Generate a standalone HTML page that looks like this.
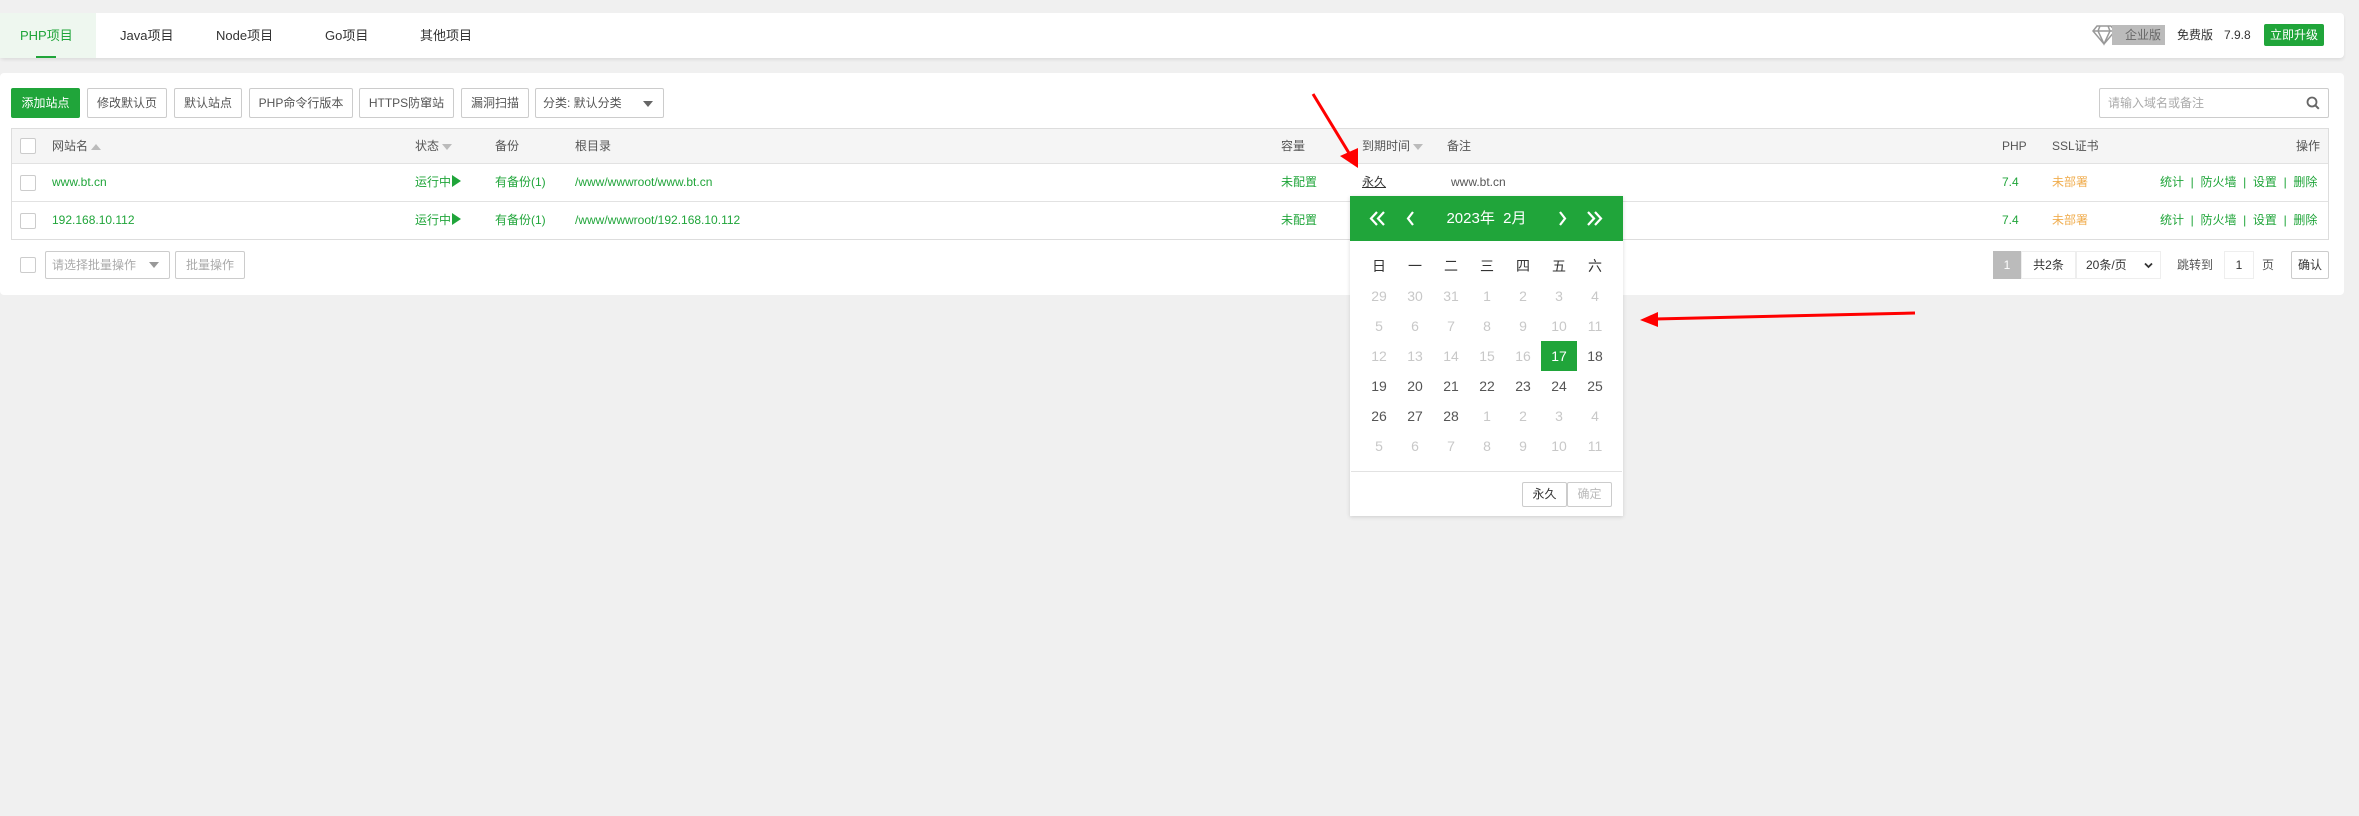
<!DOCTYPE html>
<html><head><meta charset="utf-8"><style>
*{margin:0;padding:0;box-sizing:border-box}
body{width:2359px;height:816px;background:#f0f0f0;position:relative;overflow:hidden;font-family:"Liberation Sans","Noto Sans CJK SC",sans-serif;font-size:12px;color:#555}
.a{position:absolute;white-space:nowrap}
.panel{position:absolute;background:#fff;border-radius:4px}
.btn{position:absolute;height:30px;border:1px solid #ccc;border-radius:2px;background:#fff;line-height:28px;text-align:center;color:#555;font-size:12px;white-space:nowrap;overflow:hidden}
.g{color:#20a53a}
.cb{position:absolute;width:16px;height:16px;border:1px solid #ccc;border-radius:2px;background:#fff}
.line{position:absolute;height:1px;background:#e2e2e2}
.h{line-height:34px;top:129px}
.r1{line-height:38px;top:163px}
.r2{line-height:38px;top:201px}
.tri{display:inline-block;width:0;height:0;border-left:5px solid transparent;border-right:5px solid transparent;vertical-align:middle;margin-left:3px}
.play{display:inline-block;width:0;height:0;border-top:6px solid transparent;border-bottom:6px solid transparent;border-left:9px solid #20a53a;vertical-align:-1px;margin-left:1px}
.cal td{width:36px;height:30px;text-align:center;font-size:14px;color:#555}
.cal .m{color:#c8c8c8}
</style></head><body>
<div class="panel" style="left:0;top:13px;width:2344px;height:45px;box-shadow:0 2px 3px rgba(0,0,0,.08)"></div>
<div class="a" style="left:0;top:13px;width:96px;height:45px;background:#eef7ef"></div>
<div class="a" style="left:36px;top:56px;width:20px;height:2px;background:#20a53a"></div>
<div class="a g" style="left:20px;top:13px;line-height:45px;font-size:13px">PHP项目</div>
<div class="a" style="left:120px;top:13px;line-height:45px;font-size:13px;color:#333">Java项目</div>
<div class="a" style="left:216px;top:13px;line-height:45px;font-size:13px;color:#333">Node项目</div>
<div class="a" style="left:325px;top:13px;line-height:45px;font-size:13px;color:#333">Go项目</div>
<div class="a" style="left:420px;top:13px;line-height:45px;font-size:13px;color:#333">其他项目</div>
<svg class="a" style="left:2092px;top:24px" width="24" height="22" viewBox="0 0 24 22"><path d="M5 2h14l4 5-11 13L1 7z M1 7h22 M8 2l-2 5 6 13 6-13-2-5" fill="none" stroke="#999" stroke-width="1.5"/></svg>
<div class="a" style="left:2112px;top:25px;width:53px;height:20px;background:#bbb;color:#666;font-size:12px;line-height:20px;text-align:right;padding-right:4px">企业版</div>
<div class="a" style="left:2177px;top:25px;line-height:20px;color:#333">免费版</div>
<div class="a" style="left:2224px;top:25px;line-height:20px;color:#333">7.9.8</div>
<div class="a" style="left:2264px;top:24px;width:60px;height:22px;background:#20a53a;color:#fff;border-radius:2px;line-height:22px;text-align:center;font-size:12px">立即升级</div>

<div class="panel" style="left:0;top:73px;width:2344px;height:222px"></div>
<div class="btn" style="left:11px;top:88px;width:69px;background:#20a53a;border-color:#20a53a;color:#fff">添加站点</div>
<div class="btn" style="left:87px;top:88px;width:80px">修改默认页</div>
<div class="btn" style="left:174px;top:88px;width:68px">默认站点</div>
<div class="btn" style="left:249px;top:88px;width:104px">PHP命令行版本</div>
<div class="btn" style="left:359px;top:88px;width:95px">HTTPS防窜站</div>
<div class="btn" style="left:461px;top:88px;width:68px">漏洞扫描</div>
<div class="btn" style="left:535px;top:88px;width:129px;text-align:left;padding-left:7px">分类: 默认分类<span style="position:absolute;right:10px;top:12px;border:5px solid transparent;border-top:6px solid #666"></span></div>
<div class="btn" style="left:2099px;top:88px;width:230px;text-align:left;padding-left:8px;color:#aaa">请输入域名或备注
<svg style="position:absolute;right:8px;top:7px" width="14" height="14" viewBox="0 0 14 14"><circle cx="6" cy="6" r="4.5" fill="none" stroke="#666" stroke-width="1.8"/><path d="M9.3 9.3l3.5 3.5" stroke="#666" stroke-width="2"/></svg></div>

<div class="a" style="left:11px;top:128px;width:2318px;height:112px;border:1px solid #ddd"></div>
<div class="a" style="left:12px;top:129px;width:2316px;height:34px;background:#f5f5f5"></div>
<div class="line" style="left:12px;top:163px;width:2316px"></div>
<div class="line" style="left:12px;top:201px;width:2316px"></div>
<div class="cb" style="left:20px;top:138px"></div>
<div class="cb" style="left:20px;top:175px"></div>
<div class="cb" style="left:20px;top:213px"></div>
<div class="a h" style="left:52px">网站名<span class="tri" style="border-bottom:6px solid #bbb"></span></div>
<div class="a h" style="left:415px">状态<span class="tri" style="border-top:6px solid #bbb"></span></div>
<div class="a h" style="left:495px">备份</div>
<div class="a h" style="left:575px">根目录</div>
<div class="a h" style="left:1281px">容量</div>
<div class="a h" style="left:1362px">到期时间<span class="tri" style="border-top:6px solid #bbb"></span></div>
<div class="a h" style="left:1447px">备注</div>
<div class="a h" style="left:2002px">PHP</div>
<div class="a h" style="left:2052px">SSL证书</div>
<div class="a h" style="left:2296px">操作</div>

<div class="a g r1" style="left:52px">www.bt.cn</div>
<div class="a g r2" style="left:52px">192.168.10.112</div>
<div class="a g r1" style="left:415px">运行中<span class="play"></span></div>
<div class="a g r2" style="left:415px">运行中<span class="play"></span></div>
<div class="a g r1" style="left:495px">有备份(1)</div>
<div class="a g r2" style="left:495px">有备份(1)</div>
<div class="a g r1" style="left:575px">/www/wwwroot/www.bt.cn</div>
<div class="a g r2" style="left:575px">/www/wwwroot/192.168.10.112</div>
<div class="a g r1" style="left:1281px">未配置</div>
<div class="a g r2" style="left:1281px">未配置</div>
<div class="a r1" style="left:1362px;color:#333;text-decoration:underline">永久</div>
<div class="a r1" style="left:1451px">www.bt.cn</div>
<div class="a g r1" style="left:2002px">7.4</div>
<div class="a g r2" style="left:2002px">7.4</div>
<div class="a r1" style="left:2052px;color:#f0ad4e">未部署</div>
<div class="a r2" style="left:2052px;color:#f0ad4e">未部署</div>
<div class="a g r1" style="left:2160px">统计 &nbsp;| &nbsp;防火墙 &nbsp;| &nbsp;设置 &nbsp;| &nbsp;删除</div>
<div class="a g r2" style="left:2160px">统计 &nbsp;| &nbsp;防火墙 &nbsp;| &nbsp;设置 &nbsp;| &nbsp;删除</div>

<div class="cb" style="left:20px;top:257px"></div>
<div class="btn" style="left:45px;top:251px;width:125px;height:28px;line-height:26px;text-align:left;padding-left:6px;color:#aaa">请选择批量操作<span style="position:absolute;right:10px;top:10px;border:5px solid transparent;border-top:6px solid #999"></span></div>
<div class="btn" style="left:175px;top:251px;width:70px;height:28px;line-height:26px;color:#aaa">批量操作</div>
<div class="a" style="left:1993px;top:251px;width:28px;height:28px;background:#bbb;color:#fff;text-align:center;line-height:28px">1</div>
<div class="a" style="left:2021px;top:251px;width:55px;height:28px;border:1px solid #eee;text-align:center;line-height:26px;color:#333">共2条</div>
<div class="a" style="left:2076px;top:251px;width:85px;height:28px;border:1px solid #eee;line-height:26px;padding-left:9px;color:#333">20条/页<svg style="position:absolute;right:7px;top:10px" width="9" height="7" viewBox="0 0 9 7"><path d="M1 1.5l3.5 3.5 3.5-3.5" fill="none" stroke="#333" stroke-width="1.8"/></svg></div>
<div class="a" style="left:2177px;top:251px;line-height:28px">跳转到</div>
<div class="a" style="left:2224px;top:251px;width:30px;height:28px;border:1px solid #eee;text-align:center;line-height:26px;color:#333">1</div>
<div class="a" style="left:2262px;top:251px;line-height:28px">页</div>
<div class="btn" style="left:2291px;top:251px;width:38px;height:28px;line-height:26px;color:#333">确认</div>

<div class="a" style="left:1350px;top:196px;width:273px;height:320px;background:#fff;box-shadow:0 1px 4px rgba(0,0,0,.15)"></div>
<div class="a" style="left:1350px;top:196px;width:273px;height:45px;background:#20a53a"></div>
<svg class="a" style="left:1350px;top:196px" width="273" height="45" viewBox="0 0 273 45" fill="none" stroke="#fff" stroke-width="2.2">
<path d="M27 16l-6 6.5 6 6.5 M34 16l-6 6.5 6 6.5"/>
<path d="M63 16l-5 6.5 5 6.5"/>
<path d="M210 16l5 6.5-5 6.5"/>
<path d="M238 16l6 6.5-6 6.5 M245 16l6 6.5-6 6.5"/>
</svg>
<div class="a" style="left:1350px;top:196px;width:273px;line-height:45px;text-align:center;color:#fff;font-size:15px">2023年 &nbsp;2月</div>
<table class="cal a" style="left:1361px;top:251px;border-collapse:collapse">
<tr><td style="color:#333">日</td><td style="color:#333">一</td><td style="color:#333">二</td><td style="color:#333">三</td><td style="color:#333">四</td><td style="color:#333">五</td><td style="color:#333">六</td></tr>
<tr><td class="m">29</td><td class="m">30</td><td class="m">31</td><td class="m">1</td><td class="m">2</td><td class="m">3</td><td class="m">4</td></tr>
<tr><td class="m">5</td><td class="m">6</td><td class="m">7</td><td class="m">8</td><td class="m">9</td><td class="m">10</td><td class="m">11</td></tr>
<tr><td class="m">12</td><td class="m">13</td><td class="m">14</td><td class="m">15</td><td class="m">16</td><td style="background:#20a53a;color:#fff">17</td><td>18</td></tr>
<tr><td>19</td><td>20</td><td>21</td><td>22</td><td>23</td><td>24</td><td>25</td></tr>
<tr><td>26</td><td>27</td><td>28</td><td class="m">1</td><td class="m">2</td><td class="m">3</td><td class="m">4</td></tr>
<tr><td class="m">5</td><td class="m">6</td><td class="m">7</td><td class="m">8</td><td class="m">9</td><td class="m">10</td><td class="m">11</td></tr>
</table>
<div class="line" style="left:1351px;top:471px;width:271px"></div>
<div class="btn" style="left:1522px;top:482px;width:45px;height:25px;line-height:23px;font-size:12px;color:#333">永久</div>
<div class="btn" style="left:1567px;top:482px;width:45px;height:25px;line-height:23px;font-size:12px;color:#bbb">确定</div>

<svg class="a" style="left:0;top:0" width="2359" height="816">
<path d="M1313 94 L1352 158" stroke="#f00" stroke-width="3"/>
<path d="M1340 156 L1358 168 L1358 148 Z" fill="#f00"/>
<path d="M1915 313 L1655 319" stroke="#f00" stroke-width="3"/>
<path d="M1640 320 L1658 312 L1658 327 Z" fill="#f00"/>
</svg>
</body></html>
